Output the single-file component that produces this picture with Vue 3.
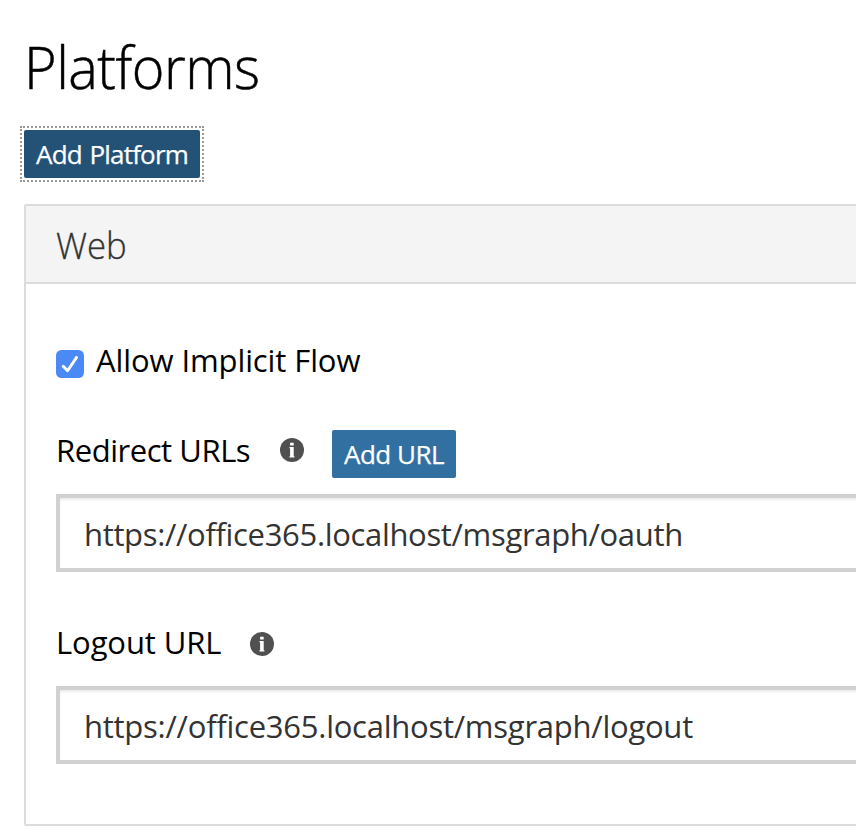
<script setup>
import { ref } from 'vue'

const implicitFlow = ref(true)
const redirectUrl = ref('https://office365.localhost/msgraph/oauth')
const logoutUrl = ref('https://office365.localhost/msgraph/logout')
</script>

<template>
  <main class="page">
    <h1 class="title"><span>Platforms</span></h1>
    <div class="focus-ring">
      <button class="btn btn-focused" type="button"><span>Add Platform</span></button>
    </div>

    <section class="panel">
      <header class="panel-head"><h2><span>Web</span></h2></header>
      <div class="panel-body">
        <label class="check">
          <input v-model="implicitFlow" class="check-input" type="checkbox" />
          <svg class="check-box" viewBox="0 0 28 28" aria-hidden="true">
            <rect width="28" height="28" rx="5.5" fill="#4b8af4" />
            <path v-if="implicitFlow" d="M7.2 16.2 11.6 20.8 20.6 7.4" fill="none" stroke="#fff" stroke-width="2.9" stroke-linecap="round" stroke-linejoin="round" />
          </svg>
          <span class="check-text">Allow Implicit Flow</span>
        </label>

        <div class="row row-redirect">
          <span class="label label-redirect">Redirect URLs</span>
          <svg class="info info-redirect" viewBox="0 0 24 24" aria-hidden="true">
            <circle cx="12" cy="12" r="12" fill="#505050" />
            <path d="M10.1 4.8h3.6v2.7h-3.6zM9.5 9h4.2v9.2h.7v1.2H9.5v-1.2h.6v-8h-.6z" fill="#fff" />
          </svg>
          <button class="btn btn-url" type="button"><span>Add URL</span></button>
        </div>
        <input v-model="redirectUrl" class="field field-redirect" type="text" spellcheck="false" />

        <div class="row row-logout">
          <span class="label label-logout">Logout URL</span>
          <svg class="info info-logout" viewBox="0 0 24 24" aria-hidden="true">
            <circle cx="12" cy="12" r="12" fill="#505050" />
            <path d="M10.1 4.8h3.6v2.7h-3.6zM9.5 9h4.2v9.2h.7v1.2H9.5v-1.2h.6v-8h-.6z" fill="#fff" />
          </svg>
        </div>
        <input v-model="logoutUrl" class="field field-logout" type="text" spellcheck="false" />
      </div>
    </section>
  </main>
</template>

<style>
body {
  background: #fff;
  overflow: hidden;
}
</style>

<style scoped>
.page {
  box-sizing: border-box;
  width: 856px;
  height: 840px;
  padding: 36px 0 0 24px;
  overflow: hidden;
  color: #000;
  font-family: "Open Sans", "Noto Sans", sans-serif;
}
.title {
  height: 60px;
  margin: 0;
  font-size: 59px;
  font-weight: 300;
  line-height: 60px;
  letter-spacing: -0.5px;
}
.title span {
  display: inline-block;
  transform: scaleX(0.945);
  transform-origin: 0 50%;
  -webkit-text-stroke: 0.5px #000;
}
.btn {
  box-sizing: border-box;
  display: block;
  height: 48px;
  padding: 0 0 0 12px;
  border: 0;
  border-radius: 2px;
  background: #3270a2;
  color: #fff;
  font-family: inherit;
  font-size: 26px;
  line-height: 48px;
  text-align: left;
  white-space: nowrap;
  -webkit-text-stroke: 0.25px #fff;
}
.focus-ring {
  width: 176px;
  margin-top: 34px;
  outline: 2px dotted #999;
  outline-offset: 2px;
}
.btn-focused {
  width: 176px;
  background: #245276;
  letter-spacing: -0.8px;
  word-spacing: 1.6px;
}
.panel {
  box-sizing: border-box;
  width: 900px;
  height: 622px;
  margin-top: 26px;
  border: 2px solid #dcdcdc;
  border-radius: 2px;
}
.panel-head {
  height: 76px;
  padding-left: 30px;
  border-bottom: 2px solid #dcdcdc;
  background: #f4f4f4;
  color: #333;
}
.panel-head h2 {
  margin: 0;
  padding-top: 3px;
  font-size: 36px;
  font-weight: 300;
  line-height: 73px;
}
.panel-head h2 span {
  display: inline-block;
  transform: scaleX(0.965);
  transform-origin: 0 50%;
  -webkit-text-stroke: 0.3px #333;
}
.panel-body {
  padding: 60px 0 0 30px;
}
.check {
  display: flex;
  align-items: center;
  width: 400px;
  height: 40px;
}
.check-input {
  position: absolute;
  opacity: 0;
}
.check-box {
  width: 28px;
  height: 28px;
  margin: 0 12px 0 0;
}
.check-text,
.label {
  padding-bottom: 8px;
  font-size: 31px;
  line-height: 40px;
  letter-spacing: -0.1px;
  white-space: nowrap;
}
.row {
  display: flex;
  align-items: center;
  height: 48px;
}
.row-redirect {
  margin-top: 46px;
}
.label-redirect {
  width: 224px;
  letter-spacing: -0.45px;
}
.label-logout {
  width: 194px;
}
.info {
  width: 24px;
  height: 24px;
}
.info-redirect {
  margin-bottom: 8px;
}
.info-logout {
  margin-bottom: 4px;
}
.btn-url {
  width: 124px;
  margin-left: 28px;
  letter-spacing: -0.5px;
}
.field {
  box-sizing: border-box;
  display: block;
  width: 840px;
  height: 78px;
  margin: 16px 0 0;
  padding: 2px 24px 0;
  border: 4px solid #d1d1d1;
  border-radius: 0;
  outline: 0;
  background: #fff;
  box-shadow: inset 0 2px 2px rgba(0, 0, 0, 0.075);
  color: #333;
  font-family: inherit;
  font-size: 31px;
  line-height: 40px;
}
.field-redirect {
  letter-spacing: -0.33px;
}
.field-logout {
  letter-spacing: -0.25px;
}
.row-logout {
  margin-top: 50px;
}
</style>
